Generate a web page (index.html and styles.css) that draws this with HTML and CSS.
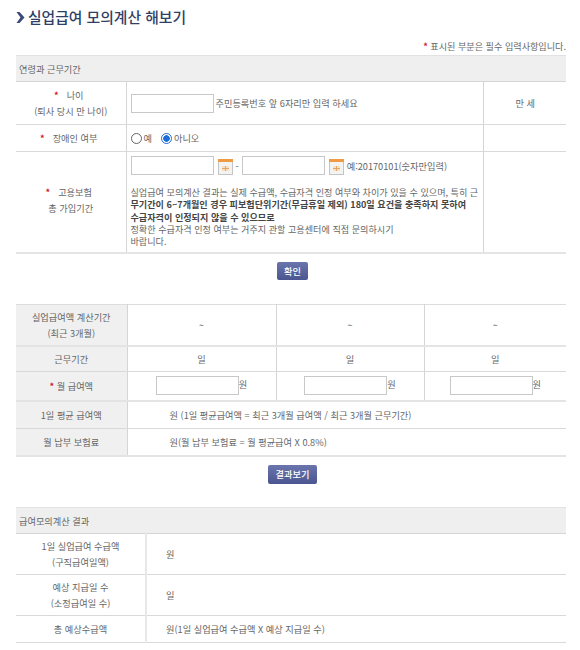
FILE: index.html
```html
<!DOCTYPE html>
<html lang="ko">
<head>
<meta charset="utf-8">
<title>실업급여 모의계산 해보기</title>
<link rel="stylesheet" href="styles.css">
</head>
<body>
<h1 class="title"><svg class="chev" width="9" height="11" viewBox="0 0 9 11"><path d="M0.5 0 L3.5 0 L8.5 5.5 L3.5 11 L0.5 11 L4.5 5.5 Z" fill="#3c4a78"/></svg>실업급여 모의계산 해보기</h1>
<p class="note"><span class="req">*</span> 표시된 부분은 필수 입력사항입니다.</p>

<table class="grid t1">
<colgroup><col class="c1a"><col class="c1b"><col class="c1c"></colgroup>
<tr class="h-sec"><th colspan="3">연령과 근무기간</th></tr>
<tr class="r-age">
<td class="lab"><span class="req star">*</span>나이<br>(퇴사 당시 만 나이)</td>
<td class="val"><div class="line"><input class="inp w83" type="text"><span class="hint">주민등록번호 앞 6자리만 입력 하세요</span></div></td>
<td class="ctr">만 세</td>
</tr>
<tr class="r-dis">
<td class="lab one"><span class="req star">*</span>장애인 여부</td>
<td class="val"><div class="line radios"><span class="radio"></span><span>예</span><span class="radio on"></span><span>아니오</span></div></td>
<td></td>
</tr>
<tr class="r-ins">
<td class="lab"><span class="req star">*</span>고용보험<br>총 가입기간</td>
<td class="val top">
<div class="line dates"><input class="inp w83" type="text">
<svg class="cal" width="15" height="16" viewBox="0 0 15 16"><rect x="0.5" y="0.5" width="14" height="15" fill="#f3f3f1" stroke="#c4c4c4"/><rect x="0" y="0" width="15" height="3" fill="#ef9a45"/><rect x="4" y="7" width="7" height="5" fill="#f8e0c4"/><path d="M7.5 7v5M4 9.5h7" stroke="#e7a565" stroke-width="1"/></svg>
<span class="dash">-</span><input class="inp w83" type="text">
<svg class="cal" width="15" height="16" viewBox="0 0 15 16"><rect x="0.5" y="0.5" width="14" height="15" fill="#f3f3f1" stroke="#c4c4c4"/><rect x="0" y="0" width="15" height="3" fill="#ef9a45"/><rect x="4" y="7" width="7" height="5" fill="#f8e0c4"/><path d="M7.5 7v5M4 9.5h7" stroke="#e7a565" stroke-width="1"/></svg>
<span>예:20170101(숫자만입력)</span></div>
<p class="desc">실업급여 모의계산 결과는 실제 수급액, 수급자격 인정 여부와 차이가 있을 수 있으며, 특히 근<br><b>무기간이 6~7개월인 경우 피보험단위기간(무급휴일 제외) 180일 요건을 충족하지 못하여<br>수급자격이 인정되지 않을 수 있으므로</b><br>정확한 수급자격 인정 여부는 거주지 관할 고용센터에 직접 문의하시기<br>바랍니다.</p>
</td>
<td></td>
</tr>
</table>

<div class="btn-row b1"><button class="btn" type="button">확인</button></div>

<table class="grid t2">
<colgroup><col class="c2a"><col class="c2b"><col class="c2c"><col class="c2d"></colgroup>
<tr class="r-period"><td class="lab gray">실업급여액 계산기간<br>(최근 3개월)</td><td class="ctr">~</td><td class="ctr">~</td><td class="ctr">~</td></tr>
<tr class="r-work"><td class="lab gray">근무기간</td><td class="ctr">일</td><td class="ctr">일</td><td class="ctr">일</td></tr>
<tr class="r-pay"><td class="lab gray"><span class="req">*</span> 월 급여액</td>
<td class="ctr"><input class="inp w83" type="text"><span>원</span></td>
<td class="ctr"><input class="inp w83" type="text"><span>원</span></td>
<td class="ctr"><input class="inp w83" type="text"><span>원</span></td></tr>
<tr class="r-avg"><td class="lab gray">1일 평균 급여액</td><td colspan="3" class="formula">원 (1일 평균급여액 = 최근 3개월 급여액 / 최근 3개월 근무기간)</td></tr>
<tr class="r-prem"><td class="lab gray">월 납부 보험료</td><td colspan="3" class="formula">원(월 납부 보험료 = 월 평균급여 X 0.8%)</td></tr>
</table>

<div class="btn-row b2"><button class="btn" type="button">결과보기</button></div>

<table class="grid t3">
<colgroup><col class="c3a"><col class="c3b"></colgroup>
<tr class="h-sec"><th colspan="2">급여모의계산 결과</th></tr>
<tr class="r-res"><td class="lab">1일 실업급여 수급액<br>(구직급여일액)</td><td class="res">원</td></tr>
<tr class="r-res"><td class="lab">예상 지급일 수<br>(소정급여일 수)</td><td class="res">일</td></tr>
<tr class="r-tot"><td class="lab">총 예상수급액</td><td class="res">원(1일 실업급여 수급액 X 예상 지급일 수)</td></tr>
</table>
</body>
</html>
```
FILE: styles.css
```css
* { box-sizing: border-box; }
html, body { margin: 0; padding: 0; }
body {
  width: 580px;
  height: 650px;
  overflow: hidden;
  background: #fff;
  color: #666;
  font-family: "Noto Sans CJK KR", "Noto Sans", sans-serif;
  font-size: 9.2px;
  line-height: 16px;
  padding: 0 14px 0 16px;
}
.title {
  margin: 0;
  padding-top: 6px;
  height: 40px;
  display: flex;
  align-items: flex-start;
  font-size: 14.8px;
  line-height: 22px;
  font-weight: 500;
  color: #2f3f66;
}
.chev { margin: 6px 3px 0 0; flex: none; }
.note {
  margin: 0;
  height: 15px;
  line-height: 12px;
  text-align: right;
  font-size: 9.1px;
  color: #666;
}
.req { color: #d2122e; font-weight: 700; }
.star { margin-right: 8px; margin-left: -4px; }
.grid {
  width: 550px;
  border-collapse: collapse;
  table-layout: fixed;
}
.grid td, .grid th { padding: 0; border-bottom: 1px solid #d9d9d9; }
.c1a { width: 110px; }
.c1c { width: 82px; }
.t1 td + td { border-left: 1px solid #d5d5d5; }
.h-sec th {
  height: 26px;
  background: #efefef;
  border-top: 1px solid #e2e2e2;
  border-bottom: 1px solid #d5d5d5;
  text-align: left;
  padding-left: 3px;
  font-weight: 400;
  color: #666;
}
.lab { text-align: center; }
.ctr { text-align: center; }
.gray { background: #f0f0f0; }
.val { padding: 0 0 0 4px !important; }
.val.top { vertical-align: top; padding-top: 4px !important; }
.line { display: flex; align-items: center; gap: 1px; }
.hint { margin-left: 1px; }
.inp {
  height: 19px;
  border: 1px solid #c8c8c8;
  background: #fff;
  padding: 0;
  margin: 0;
  vertical-align: middle;
}
.w83 { width: 83px; }
.r-age td { height: 43px; }
.r-dis td { height: 27px; }
.r-ins td { height: 101px; border-bottom: 2px solid #e4e4e4; }
.r-ins .lab { padding-bottom: 3px; }
.radios { gap: 2px; }
.radio {
  width: 11px; height: 11px;
  border: 1px solid #666;
  border-radius: 50%;
  background: #fff;
  flex: none;
}
.radio.on {
  margin-left: 7px;
  border-color: #1c6fd8;
  background: radial-gradient(circle, #1c6fd8 0 3px, #fff 3.5px);
}
.cal { margin-left: 3px; flex: none; position: relative; top: 1px; }
.dash { margin: 0 2px; }
.dates span:last-child { margin-left: 2px; }
.desc { margin: 11px 0 0; font-size: 9.1px; line-height: 12.3px; white-space: nowrap; }
.desc b { font-weight: 700; color: #444; }
.btn-row { display: flex; justify-content: center; padding-left: 3px; }
.b1 { padding-top: 8px; height: 50px; }
.b2 { padding-top: 8px; height: 50px; }
.btn {
  height: 19px;
  padding: 0;
  border: 0;
  border-radius: 2px;
  background: linear-gradient(#6a75ad, #4b5690);
  color: #fff;
  font: 500 9.2px/19px "Noto Sans CJK KR", sans-serif;
}
.b1 .btn { width: 31px; height: 18px; line-height: 18px; }
.b2 .btn { width: 49px; }
.c2a { width: 111px; }
.c2b { width: 149px; }
.c2c { width: 148px; }
.t2 { border-top: 1px solid #ddd; }
.t2 td + td { border-left: 1px solid #d5d5d5; }
.t2 .formula { padding-left: 42px; }
.r-period td { height: 42px; border-bottom: 2px solid #e4e4e4; }
.r-work td { height: 25px; }
.r-pay td { height: 30px; border-bottom: 2px solid #e4e4e4; }
.r-avg td { height: 27px; }
.r-prem td { height: 28px; border-bottom: 2px solid #e4e4e4; }
.c3a { width: 130px; }
.t3 td + td { border-left: 2px solid #e8e8e8; }
.res { padding-left: 19px !important; }
.t3 .r-res td { height: 41px; }
.t3 .r-tot td { height: 27px; }
```
